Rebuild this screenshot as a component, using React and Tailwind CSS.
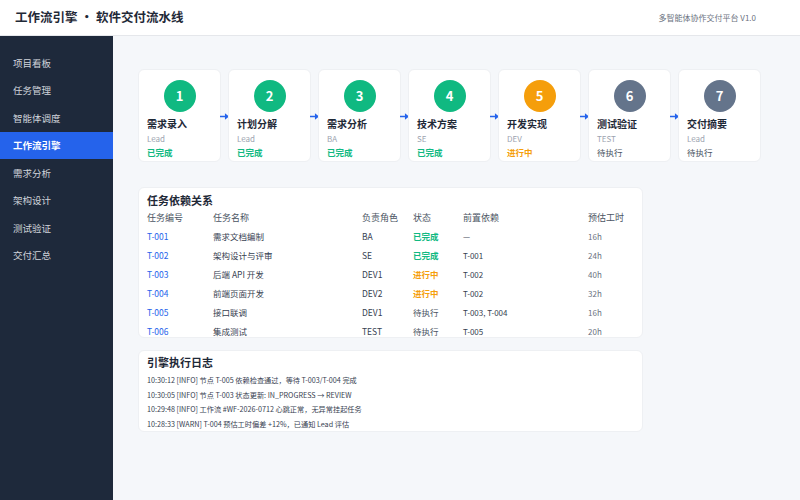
import React from "react";

const font = { fontFamily: '"Noto Sans CJK SC", "Noto Sans", sans-serif' };

const navItems = ["项目看板", "任务管理", "智能体调度", "工作流引擎", "需求分析", "架构设计", "测试验证", "交付汇总"];

const steps = [
    { n: 1, title: "需求录入", role: "Lead", status: "done" },
    { n: 2, title: "计划分解", role: "Lead", status: "done" },
    { n: 3, title: "需求分析", role: "BA", status: "done" },
    { n: 4, title: "技术方案", role: "SE", status: "done" },
    { n: 5, title: "开发实现", role: "DEV", status: "doing" },
    { n: 6, title: "测试验证", role: "TEST", status: "todo" },
    { n: 7, title: "交付摘要", role: "Lead", status: "todo" },
];

const tasks = [
    { id: "T-001", name: "需求文档编制", role: "BA", status: "done", dep: "—", hours: "16h" },
    { id: "T-002", name: "架构设计与评审", role: "SE", status: "done", dep: "T-001", hours: "24h" },
    { id: "T-003", name: "后端 API 开发", role: "DEV1", status: "doing", dep: "T-002", hours: "40h" },
    { id: "T-004", name: "前端页面开发", role: "DEV2", status: "doing", dep: "T-002", hours: "32h" },
    { id: "T-005", name: "接口联调", role: "DEV1", status: "todo", dep: "T-003, T-004", hours: "16h" },
    { id: "T-006", name: "集成测试", role: "TEST", status: "todo", dep: "T-005", hours: "20h" },
];

const logs = [
    "10:30:12 [INFO] 节点 T-005 依赖检查通过，等待 T-003/T-004 完成",
    "10:30:05 [INFO] 节点 T-003 状态更新: IN_PROGRESS → REVIEW",
    "10:29:48 [INFO] 工作流 #WF-2026-0712 心跳正常，无异常挂起任务",
    "10:28:33 [WARN] T-004 预估工时偏差 +12%，已通知 Lead 评估",
];

const statusLabel = { done: "已完成", doing: "进行中", todo: "待执行" };
const statusText = { done: "text-[#10b981] font-bold", doing: "text-[#f59e0b] font-bold", todo: "text-[#4b5563]" };
const circleBg = { done: "bg-[#10b981]", doing: "bg-[#f59e0b]", todo: "bg-[#64748b]" };

const Arrow = () => (
    <div className="w-[7px] flex items-center justify-center">
        <svg width="9" height="9" viewBox="0 0 10 10" className="shrink-0 mt-[2px]">
            <path d="M0 4.2h5.5V1.5L10 5 5.5 8.5V5.8H0z" fill="#2563eb" />
        </svg>
    </div>
);

const App = () => {
    return (
        <div className="w-[800px] h-[500px] flex flex-col bg-[#f5f7fa] overflow-hidden" style={font}>
            <div className="h-[36px] shrink-0 bg-white border-b border-[#e5e7eb] flex items-center justify-between pl-[15px] pr-[44px]">
                <h1 className="text-[12.5px] font-bold text-[#1f2937]">
                    工作流引擎<span className="mx-[3px]">•</span>软件交付流水线
                </h1>
                <span className="text-[8px] text-[#6b7280]">多智能体协作交付平台 V1.0</span>
            </div>

            <div className="flex flex-1 min-h-0">
                <div className="w-[113px] shrink-0 bg-[#1e293b] pt-[13px]">
                    {navItems.map((item) => (
                        <div
                            key={item}
                            className={`h-[27.5px] flex items-center pl-[13px] text-[9.5px] ${item === "工作流引擎" ? "bg-[#2563eb] text-white font-bold" : "text-[#d1d5db]"}`}
                        >
                            {item}
                        </div>
                    ))}
                </div>

                <div className="flex-1 pl-[25px] pt-[33px]">
                    <div className="flex">
                        {steps.map((s, i) => (
                            <React.Fragment key={s.n}>
                                {i > 0 && <Arrow />}
                                <div className="w-[83px] h-[93px] bg-white rounded-[6px] border border-[#eef0f3] pt-[10px] px-[8px]">
                                    <div className={`w-[32px] h-[32px] mx-auto rounded-full ${circleBg[s.status]} flex items-center justify-center text-white text-[13px] font-bold`}>
                                        {s.n}
                                    </div>
                                    <div className="mt-[5px] text-[10px] font-bold text-[#1f2937] leading-[14px]">{s.title}</div>
                                    <div className="text-[8px] text-[#9ca3af] leading-[12px] mt-[2px]">{s.role}</div>
                                    <div className={`text-[8.5px] leading-[12px] mt-[1px] ${statusText[s.status]}`}>{statusLabel[s.status]}</div>
                                </div>
                            </React.Fragment>
                        ))}
                    </div>

                    <div className="w-[505px] h-[151px] mt-[25px] bg-white rounded-[6px] border border-[#eef0f3] overflow-hidden px-[8px] pt-[4px]">
                        <h2 className="text-[11px] font-bold text-[#1f2937] leading-[16px]">任务依赖关系</h2>
                        <table className="w-full text-left border-collapse">
                            <thead>
                                <tr className="h-[19px] text-[9px] text-[#4b5563]">
                                    <th className="font-normal w-[66px]">任务编号</th>
                                    <th className="font-normal w-[149px]">任务名称</th>
                                    <th className="font-normal w-[51px]">负责角色</th>
                                    <th className="font-normal w-[50px]">状态</th>
                                    <th className="font-normal w-[125px]">前置依赖</th>
                                    <th className="font-normal">预估工时</th>
                                </tr>
                            </thead>
                            <tbody>
                                {tasks.map((t) => (
                                    <tr key={t.id} className="h-[19px] text-[8.5px] text-[#374151]">
                                        <td className="text-[#2563eb]">{t.id}</td>
                                        <td>{t.name}</td>
                                        <td>{t.role}</td>
                                        <td className={statusText[t.status]}>{statusLabel[t.status]}</td>
                                        <td className="text-[8px]">{t.dep}</td>
                                        <td className="text-[8px] text-[#6b7280]">{t.hours}</td>
                                    </tr>
                                ))}
                            </tbody>
                        </table>
                    </div>

                    <div className="w-[505px] h-[82px] mt-[12px] bg-white rounded-[6px] border border-[#eef0f3] overflow-hidden px-[8px] pt-[3px]">
                        <h2 className="text-[11px] font-bold text-[#1f2937] leading-[16px]">引擎执行日志</h2>
                        <div className="mt-[3px]">
                            {logs.map((l) => (
                                <div key={l} className="text-[7.2px] text-[#374151] leading-[14.7px]">{l}</div>
                            ))}
                        </div>
                    </div>
                </div>
            </div>
        </div>
    );
};

export default App;
